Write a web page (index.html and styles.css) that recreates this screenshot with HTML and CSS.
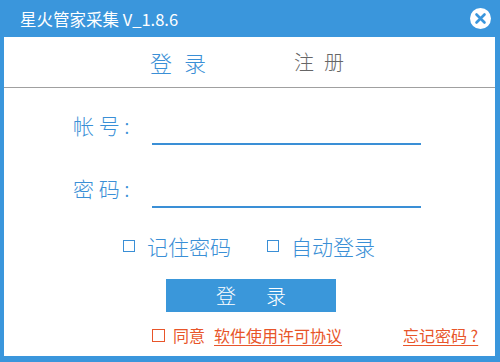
FILE: index.html
```html
<!DOCTYPE html>
<html lang="zh-CN">
<head>
<meta charset="utf-8">
<title>星火管家采集</title>
<link rel="stylesheet" href="styles.css">
</head>
<body>
<div class="window">
  <div class="titlebar">
    <span class="title">星火管家采集 V_1.8.6</span>
    <span class="close">
      <svg width="21" height="21" viewBox="0 0 21 21"><circle cx="10.5" cy="10.5" r="10.5" fill="#fff"/><path d="M6.5 6.5 L14.5 14.5 M14.5 6.5 L6.5 14.5" stroke="#3a96dc" stroke-width="2.6" stroke-linecap="round"/></svg>
    </span>
  </div>
  <div class="content">
    <div class="tabs">
      <span class="tab active">登录</span>
      <span class="tab">注册</span>
    </div>
    <div class="form">
      <div class="row">
        <span class="label">帐 号 :</span>
        <span class="field"></span>
      </div>
      <div class="row row2">
        <span class="label">密 码 :</span>
        <span class="field"></span>
      </div>
      <div class="checks">
        <span class="check"><span class="box"></span>记住密码</span>
        <span class="check"><span class="box"></span>自动登录</span>
      </div>
      <div class="btn">登录</div>
      <div class="agree">
        <span class="box orange"></span>
        <span class="agree-text">同意</span>
        <a class="link">软件使用许可协议</a>
        <a class="link forgot">忘记密码 ?</a>
      </div>
    </div>
  </div>
</div>
</body>
</html>
```
FILE: styles.css
```css
* { box-sizing: border-box; }
html, body { margin: 0; padding: 0; }
body {
  font-family: "Noto Sans CJK SC", "Noto Sans", sans-serif;
  font-weight: 300;
  width: 500px;
  height: 362px;
  overflow: hidden;
}
.window {
  width: 500px;
  height: 362px;
  background: #3a96dc;
  display: flex;
  flex-direction: column;
}
.titlebar {
  height: 37px;
  display: flex;
  align-items: center;
  justify-content: space-between;
  padding: 0 9px 0 20px;
}
.title {
  color: #fff;
  font-size: 16.5px;
  font-weight: 400;
  line-height: 20px;
}
.close { display: flex; }
.content {
  flex: 1;
  margin: 0 5px 6px 4px;
  background: #fff;
  display: flex;
  flex-direction: column;
}
.tabs {
  height: 51px;
  border-bottom: 1px solid #a0a0a0;
  display: flex;
  align-items: center;
  padding-left: 146px;
  gap: 76px;
}
.tab {
  font-size: 20px;
  color: #666;
  letter-spacing: 10px;
  line-height: 24px;
}
.tab.active {
  font-size: 22px;
  color: #3a8fd6;
  letter-spacing: 12px;
}
.form {
  padding: 22px 0 0 69px;
  display: flex;
  flex-direction: column;
}
.row {
  display: flex;
  align-items: flex-start;
  height: 35px;
}
.row2 { margin-top: 28px; }
.label {
  width: 79px;
  font-size: 21px;
  line-height: 30px;
  color: #3a8fd6;
}
.field {
  width: 269px;
  height: 35px;
  border-bottom: 2px solid #3a8fd6;
}
.checks {
  margin-top: 26px;
  padding-left: 50px;
  display: flex;
  gap: 36px;
  font-size: 21px;
  line-height: 24px;
  color: #3a8fd6;
}
.check {
  display: flex;
  align-items: center;
}
.box {
  width: 12px;
  height: 12px;
  border: 1.5px solid #3a8fd6;
  margin-right: 12px;
  display: inline-block;
}
.btn {
  margin: 21px 0 0 93px;
  width: 170px;
  height: 33px;
  background: #3a97da;
  color: #fff;
  font-size: 20px;
  line-height: 33px;
  text-align: center;
  letter-spacing: 30px;
  text-indent: 30px;
}
.agree {
  margin-top: 13px;
  padding-left: 79px;
  display: flex;
  align-items: center;
  font-size: 16px;
  font-weight: 400;
  line-height: 20px;
  color: #e8552a;
}
.box.orange {
  border-color: #e8552a;
  width: 13px;
  height: 13px;
  margin-right: 8px;
}
.agree-text { margin-right: 9px; }
.link {
  color: #e8552a;
  text-decoration: underline;
  text-underline-offset: 3px;
}
.forgot { margin-left: 61px; }
```
